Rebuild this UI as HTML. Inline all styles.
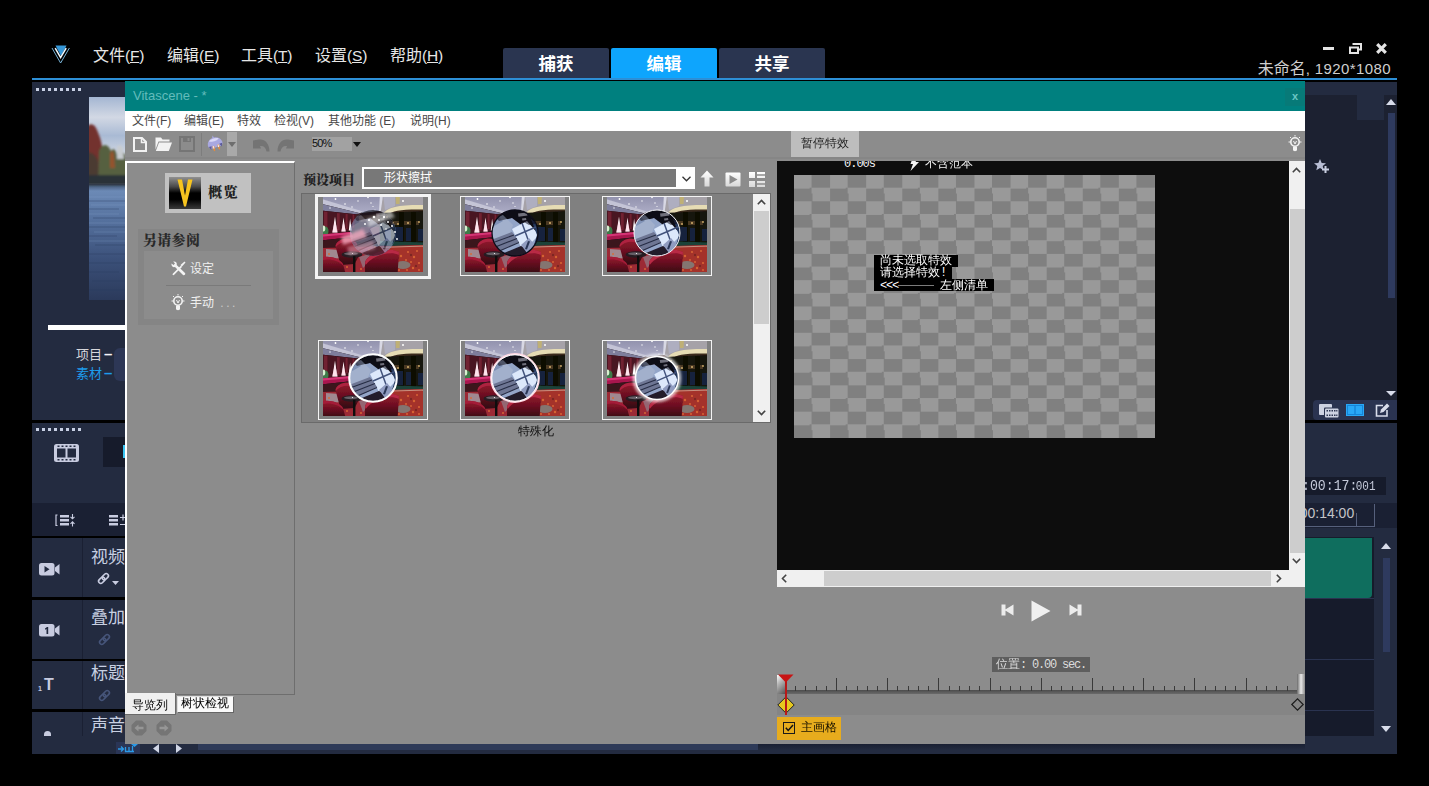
<!DOCTYPE html>
<html lang="zh-CN">
<head>
<meta charset="utf-8">
<title>Vitascene</title>
<style>
*{box-sizing:border-box;margin:0;padding:0}
html,body{width:1429px;height:786px;overflow:hidden;background:#000}
body{position:relative;font-family:"Liberation Sans","Noto Sans CJK SC",sans-serif;color:#fff}
.a{position:absolute}
.t{position:absolute;white-space:nowrap;line-height:1}
svg{position:absolute;overflow:visible}
/* main app */
#menubar .t{font-size:16px;color:#e6e6e6;top:48px}
.tab{position:absolute;top:48px;height:31px;background:#2a3550;color:#fff;font-weight:bold;font-size:17.5px;text-align:center;line-height:33px;border-radius:2px 2px 0 0}
.tab.on{background:#0ea5fd}
#blueline{left:32px;top:78px;width:1365px;height:2px;background:#2d8fd6}
#leftp{left:32px;top:80px;width:94px;height:675px;background:#232b40}
#rightp{left:1305px;top:80px;width:92px;height:675px;background:#232b40}
/* vitascene */
#vs{left:125px;top:81px;width:1180px;height:663px;background:#8c8c8c}
#vs .title{left:0;top:0;width:1180px;height:30px;background:#00807f}
#vs .menu{left:0;top:30px;width:1180px;height:20px;background:#fff}
#vs .menu .t{font-size:12px;color:#484848;top:4px}

#menubar u{text-decoration:underline}
.lat{font-size:15.5px;letter-spacing:-.2px}
.navy{background:#232b40}
.dk{background:#161b2b}
.dots{position:absolute;height:3px;width:46px;background:repeating-linear-gradient(90deg,#c8d0e4 0 3px,transparent 3px 6px)}
.trk{position:absolute;left:32px;width:93px;background:#232b40}
.trk i{position:absolute;left:50px;top:0;bottom:0;width:1px;background:#1a2033}
.trk .t{left:59px;font-size:17px;color:#c8d0e2}

#vs .tt{position:absolute;white-space:nowrap;line-height:1}
.ser{font-family:"Liberation Serif","Noto Serif CJK SC",serif}
.ls{letter-spacing:-1.2px}
.pix{font-family:"Liberation Mono","WenQuanYi Zen Hei","Noto Sans CJK SC",monospace}
.frame{position:absolute;width:110px;height:80px;border:1px solid #f4f4f4}
.frame svg{left:4px;top:0}
.frame.sel{border:3px solid #f4f4f4;width:116px;height:85px}
.frame.sel svg{left:5px;top:0}
</style>
</head>
<body>

<svg width="0" height="0" style="left:0;top:0">
<defs>
<filter id="b1" x="-5%" y="-5%" width="110%" height="110%"><feGaussianBlur stdDeviation="0.55"/></filter>
<filter id="b2" x="-20%" y="-20%" width="140%" height="140%"><feGaussianBlur stdDeviation="1.6"/></filter>
<linearGradient id="ceil" x1="0" y1="0" x2="0" y2="1"><stop offset="0" stop-color="#8e8eaa"/><stop offset="1" stop-color="#adadc6"/></linearGradient>
<linearGradient id="sph" x1="0" y1="0" x2="1" y2="1"><stop offset="0" stop-color="#8fa8d0"/><stop offset=".5" stop-color="#c8d8f0"/><stop offset="1" stop-color="#5a6a90"/></linearGradient>
<linearGradient id="chg" x1="0" y1="0" x2="0" y2="1"><stop offset="0" stop-color="#96172e"/><stop offset=".45" stop-color="#6e1022"/><stop offset="1" stop-color="#2e0810"/></linearGradient><clipPath id="tc"><rect width="100" height="75"/></clipPath>
<clipPath id="cc"><circle cx="50" cy="36" r="23"/></clipPath>
<g id="room" clip-path="url(#tc)">
  <rect width="100" height="75" fill="#20120f"/>
  <g filter="url(#b1)">
  <path d="M-3 -3h66l-6 17-17 2L-3 2z" fill="url(#ceil)"/>
  <path d="M-3 1.500L40 14.500l-3 1.800L-3 6.500z" fill="#c4c4d6"/>
  <path d="M-3 6.500l40 9.800-2 1.200L-3 13.500z" fill="#7e7e9c"/>
  <path d="M-3 13.500l38 4-3 16L-3 38z" fill="#4a1320"/>
  <path d="M1 14.500l3.500 .4v20l-3.500 .5zM14 16l2.800 .3v17l-2.800 .3zM22.500 16.800l2.200 .2v15l-2.200 .3zM29.500 17.500l1.800 .2v13l-1.800 .3z" fill="#702030"/>
  <path d="M33 17l25-3v34l-27-4z" fill="#3e2428"/>
  <path d="M36 19l20-2v6l-20 2z" fill="#6a4a40"/>
  <path d="M38 30l18 0v8l-20-1z" fill="#5a2430"/>
  <path d="M60 -3h43v20H62l-5-3z" fill="#a6a2a8"/>
  <path d="M57 -3h3.200L57.800 14h-1.800z" fill="#d8d8e4"/>
  <path d="M60 -3h12v12l-10 4z" fill="#aeaec0"/>
  <path d="M62 17c4-5 14-7 41-6.500v8H62z" fill="#3a2c1e"/>
  <path d="M61 16c4-6 16-8.500 42-8v4.500c-24-.5-34 1-38 5.500z" fill="#e6dcb4"/>
  
  <path d="M72.500 -2h4.500l-.5 9h-3.500z" fill="#c6b466" opacity=".8"/>
  <path d="M57 16l46-2v37l-46-4z" fill="#18120e"/>
  <path d="M66 24h30v4H66z" fill="#4a3820"/>
  <path d="M76 15h5v32h-5zM88 15h5v33h-5z" fill="#0a0806"/>
  <path d="M72 30h8v14h-8zM83 31h5v13h-5zM95 32h5v12h-5zM62 33h6v11h-6z" fill="#18233c"/>
  <path d="M57 44l46 1.500v5.500l-46-3z" fill="#1b4238"/>
  <path d="M9.500 35.500L12 19.500l2.200 16zM18.600 34.500L20.500 20.500l2 14zM25.800 33.500l1.300-12 1.600 12z" fill="#fff"/>
  <path d="M9 35.500l3-12 3 12zM18 34.500l2.500-10 2.500 10z" fill="#ffd0e0" opacity=".6"/>
  <ellipse cx="2" cy="34" rx="3.500" ry="4.500" fill="#3e7a48"/>
  <ellipse cx="0.500" cy="31.500" rx="1.800" ry="3" fill="#d8f0d0"/>
  <path d="M-3 37.500l31-2.500 2 5-33 3.500z" fill="#a8154e"/>
  <path d="M-3 37.500l31-2.500 .8 2-31.800 2.800z" fill="#d43474"/>
  <path d="M-3 43.500l33-3.500 1 8-34 4.500z" fill="#3a141c"/>
  <path d="M-3 51l106-3v30H-3z" fill="#9c2a36"/>
  <path d="M56 49.500l47-1.500v30H52z" fill="#a4322c"/>
  <path d="M60 50.300l40-1.200 3 6" fill="none" stroke="#d0a894" stroke-width=".8"/>
  <ellipse cx="80" cy="68" rx="7.500" ry="4" fill="#84746f"/>
  <path d="M3 52l14 1 2 8-16 1z" fill="#a08890"/>
  <path d="M36 60l10-3 2 6-8 8z" fill="#946672"/>
  <g fill="#dc6a34" opacity=".9"><circle cx="62" cy="56" r="1.100"/><circle cx="67" cy="60" r="1.200"/><circle cx="72" cy="55" r="1"/><circle cx="78" cy="59" r="1.200"/><circle cx="85" cy="55" r="1.100"/><circle cx="91" cy="60" r="1.200"/><circle cx="96" cy="66" r="1.100"/><circle cx="90" cy="71" r="1.200"/><circle cx="70" cy="70" r="1.100"/><circle cx="64" cy="66" r="1"/><circle cx="83" cy="63" r="1"/><circle cx="76" cy="73" r="1"/><circle cx="96" cy="73" r="1"/><circle cx="58" cy="71" r="1"/><circle cx="6" cy="57" r="1"/><circle cx="24" cy="70" r="1"/><circle cx="38" cy="72" r="1"/><circle cx="46" cy="53" r="1"/><circle cx="52" cy="50" r="1"/><circle cx="88" cy="65" r="1"/><circle cx="74" cy="64" r="1"/><circle cx="94" cy="54" r="1"/><circle cx="60" cy="61" r="1"/><circle cx="68" cy="74" r="1"/><circle cx="84" cy="73" r="1"/></g>
  <g fill="#6c2420" opacity=".7"><circle cx="65" cy="57" r="1.200"/><circle cx="75" cy="61" r="1.200"/><circle cx="88" cy="58" r="1.200"/><circle cx="93" cy="69" r="1.200"/><circle cx="62" cy="70" r="1.200"/><circle cx="70" cy="66" r="1.200"/></g>
  <path d="M12.500 49c1-8 17-10 21-3l3 12-5 9-14 1z" fill="url(#chg)"/>
  <path d="M12.500 49c1-8 17-10 21-3l.5 2c-5-5-17-4-21 2z" fill="#ae2440"/>
  <path d="M42 66c1-9 24-17 34-11l-1.500 23H42z" fill="url(#chg)"/>
  <path d="M42 66c1-9 24-17 34-11l-.3 3c-9-5-28 2-33 10z" fill="#b82a44"/>
  <path d="M-3 61c8-3 19 0 23 6l3 11H-3z" fill="url(#chg)"/>
  <path d="M-3 61c8-3 19 0 23 6l.5 2c-5-6-16-8-23.500-5z" fill="#a41e38"/>
  <ellipse cx="29" cy="57.500" rx="10.500" ry="3.300" fill="#261d22"/>
  <ellipse cx="28" cy="56.800" rx="7" ry="1.500" fill="#665e66"/>
  <path d="M30 59h2.400v19H30z" fill="#0e080a"/>
  </g>
  <g fill="#fff"><circle cx="12.500" cy="2" r=".9"/><circle cx="22" cy="7" r=".8"/><circle cx="7" cy="11" r=".7"/><circle cx="29" cy="10" r=".7"/><circle cx="35" cy="4" r=".7"/><circle cx="45" cy="0.500" r=".8"/><circle cx="48" cy="6" r=".7"/><circle cx="50" cy="9.500" r=".6"/><circle cx="80" cy="4" r="1"/><circle cx="52" cy="13" r=".6"/><circle cx="29.500" cy="56.500" r=".6"/></g>
  <g fill="#d4b06c" filter="url(#b1)"><circle cx="70" cy="26" r="1"/><circle cx="75" cy="27" r=".9"/><circle cx="85" cy="26" r="1"/><circle cx="96" cy="25" r=".9"/><circle cx="64" cy="20" r=".9"/></g>
</g>
<g id="ball">
  <circle cx="50" cy="36" r="23" fill="#93a5c8"/>
  <g clip-path="url(#cc)" filter="url(#b1)">
    <path d="M30 20l8-7 14-3 14 4 8 12 1 9-16-5-12-9-12 3z" fill="#110e18"/>
    <path d="M24 22l14-4 10 10-4 10-20 7z" fill="#a2b0cc"/>
    <path d="M24 24l10-4 4 4-14 8z" fill="#7f91b6"/>
    <path d="M53 16.500l9-1 .5 3-9 1.200zM57 21.500l4-.6 .4 2-4 .7z" fill="#e8eef8"/>
    <path d="M47 32l15-8 12 14-16 16z" fill="#dce8fb"/>
    <path d="M66 22l10 8-2 22-8 6 6-20z" fill="#263a60"/>
    <path d="M57 26l8 22M50 39l21-9" stroke="#42527c" stroke-width="1.500" fill="none"/>
    <path d="M26 43l21-8 7 10-24 12z" fill="#6e7694"/>
    <path d="M27 46l22-8M29 50.500l23-9M32 55l22-9.500" stroke="#262c44" stroke-width="1.100" fill="none"/>
    <path d="M34 58l22-9 10 4-8 10H40z" fill="#211a2c"/>
    <path d="M56 48l8-7 6 7-8 8z" fill="#909cc0"/>
    <path d="M60 52l3-8 2 .5-3 8z" fill="#2c3858"/>
    <path d="M24 12h52v14l-12 2-14-8-16 4z" fill="#0c0a14" opacity=".55"/>
    <path d="M24 12l14 0-8 14-6 10z" fill="#5a6888" opacity=".5"/>
  </g>
</g>
</defs>
</svg>
<!-- MAIN APP MENU -->
<div id="menubar" class="a" style="left:0;top:0;width:1429px;height:78px">
  <span class="t" style="left:93px">文件<span class="lat">(<u>F</u>)</span></span>
  <span class="t" style="left:167px">编辑<span class="lat">(<u>E</u>)</span></span>
  <span class="t" style="left:241px">工具<span class="lat">(<u>T</u>)</span></span>
  <span class="t" style="left:315px">设置<span class="lat">(<u>S</u>)</span></span>
  <span class="t" style="left:390px">帮助<span class="lat">(<u>H</u>)</span></span>
</div>
<svg style="left:50px;top:44px" width="22" height="21" viewBox="50 44 22 21"><path d="M55.500 45.500h11l-2 4-3.500 6.500-3.500-6.500z" fill="#3596d6"/><path d="M55.200 48.200L60.600 57.600 66.200 48.200" fill="none" stroke="#f4fbff" stroke-width="1.500"/><path d="M52 48L60.600 63 69.400 48" fill="none" stroke="#78b4d8" stroke-width="1"/></svg>
<div class="tab" style="left:503px;width:106px">捕获</div>
<div class="tab on" style="left:611px;width:106px">编辑</div>
<div class="tab" style="left:719px;width:106px">共享</div>
<span class="t" style="right:38px;top:61px;font-size:16px;color:#cfcfcf">未命名<span style="font-size:15px;letter-spacing:.4px">, 1920*1080</span></span>
<div class="a" style="left:1323px;top:47px;width:11px;height:3px;background:#e4e4e4"></div>
<svg style="left:1349px;top:43px" width="13" height="11" viewBox="0 0 13 11"><path d="M3.5 1h8.500v5.500h-2.500" fill="none" stroke="#e4e4e4" stroke-width="2"/><rect x="1" y="4.500" width="8" height="5.500" fill="none" stroke="#e4e4e4" stroke-width="2"/></svg>
<svg style="left:1376px;top:43px" width="11" height="11" viewBox="0 0 11 11"><path d="M1.200 1.200L9.800 9.800M9.800 1.200L1.200 9.800" stroke="#e4e4e4" stroke-width="3.200"/></svg>
<div id="blueline" class="a"></div>

<!-- LEFT PANELS -->
<div class="a navy" style="left:32px;top:82px;width:94px;height:338px"></div>
<div class="dots" style="left:36px;top:88px"></div>
<svg id="photo" style="left:89px;top:97px" width="36" height="203" viewBox="0 0 36 203">
<defs><linearGradient id="sky" x1="0" y1="0" x2="0" y2="1"><stop offset="0" stop-color="#a4b6d2"/><stop offset=".22" stop-color="#d2d8e4"/><stop offset=".42" stop-color="#a9bad4"/><stop offset=".62" stop-color="#cfd6e2"/><stop offset="1" stop-color="#c4ccd8"/></linearGradient>
<linearGradient id="wat" x1="0" y1="0" x2="0" y2="1"><stop offset="0" stop-color="#3c4c66"/><stop offset=".06" stop-color="#6c8ab6"/><stop offset=".3" stop-color="#56729f"/><stop offset=".65" stop-color="#3b5079"/><stop offset="1" stop-color="#2b3a5b"/></linearGradient>
<filter id="b3" x="-10%" y="-10%" width="120%" height="120%"><feGaussianBlur stdDeviation="1.100"/></filter>
<clipPath id="pc"><rect width="36" height="203"/></clipPath></defs>
<g clip-path="url(#pc)">
<rect width="36" height="92" fill="url(#sky)"/>
<rect y="87" width="36" height="116" fill="url(#wat)"/>
<g filter="url(#b3)">
<path d="M-2 30c3-5 8-3 10 3 2 5 4 9 5 16l1 12 2 26H-2z" fill="#73302f"/>
<path d="M-2 56c4-2 9 2 11 8l2 24H-2z" fill="#4c3a30"/>
<path d="M10 54c3-8 9-8 12 0 2-3 5-2 6 4 3-4 9-3 10 3v27H9z" fill="#566040"/>
<path d="M21 57c1-4 3-4 4 0l1 14h-5z" fill="#94522e"/>
<path d="M28 50c2-3 5-2 6 2l1 10h-7z" fill="#c8ccd0"/>
<path d="M-2 78h40v10H-2z" fill="#2a3238"/>
</g>
<g stroke="#2a3b5e" stroke-width=".8" opacity=".5"><path d="M0 104h36M0 112h30M4 121h32M0 130h36M0 139h28M6 148h30M0 157h36M0 166h36M0 175h30M3 184h33M0 193h36"/></g>
<g stroke="#8caad2" stroke-width=".7" opacity=".35"><path d="M0 100h36M2 108h34M0 117h30M0 126h36M5 135h31M0 144h36"/></g>
</g></svg>
<div class="a" style="left:48px;top:325px;width:78px;height:5px;background:#fff"></div>
<div class="a" style="left:114px;top:348px;width:20px;height:33px;border-radius:6px;background:#2d3756"></div>
<span class="t" style="left:76px;top:346px;font-size:13px;color:#d8d8dc">项目<b style="font-family:'Liberation Sans';font-size:15px;margin-left:2px;color:#f4f4f8">–</b></span>
<span class="t" style="left:76px;top:364.5px;font-size:13px;color:#1d9cec">素材<b style="font-family:'Liberation Sans';font-size:15px;margin-left:2px">–</b></span>

<div class="a navy" style="left:32px;top:423px;width:94px;height:80px"></div>
<div class="dots" style="left:36px;top:428px"></div>
<div class="a dk" style="left:103px;top:437px;width:23px;height:30px"></div>
<div class="a" style="left:123px;top:445px;width:3px;height:13px;background:#39c4f2"></div>
<div class="a" style="left:32px;top:503px;width:94px;height:33px;background:#1a2033"></div>
<div class="trk" style="top:538px;height:59px"><i></i><span class="t" style="top:11px">视频</span></div>
<div class="trk" style="top:600px;height:59px"><i></i><span class="t" style="top:9px">叠加</span></div>
<div class="trk" style="top:661px;height:48px"><i></i><span class="t" style="top:4px">标题</span></div>
<div class="trk" style="top:712px;height:24px"><i></i><span class="t" style="top:5px">声音</span></div>
<div class="a navy" style="left:32px;top:736px;width:1365px;height:18px"></div>
<div class="a" style="left:198px;top:744px;width:560px;height:6px;background:#2e3a58"></div><div class="a" style="left:758px;top:743px;width:560px;height:7px;background:linear-gradient(#181e30,#232b40)"></div>

<!-- RIGHT PANELS -->
<div class="a" style="left:1305px;top:82px;width:92px;height:338px;background:#1c2131"></div>
<div class="a navy" style="left:1305px;top:82px;width:92px;height:13px"></div>
<div class="a navy" style="left:1357px;top:95px;width:27px;height:25px"></div>

<div class="a" style="left:1388px;top:113px;width:7px;height:185px;background:#2e3a5e"></div>
<div class="a" style="left:1313px;top:400px;width:84px;height:20px;border-radius:4px 0 0 4px;background:#2a3350"></div>
<div class="a navy" style="left:1305px;top:423px;width:92px;height:331px"></div>
<div class="a dk" style="left:1305px;top:477px;width:81px;height:18px"></div>
<div class="a" style="left:1305px;top:503px;width:92px;height:25px;background:#1a2033"></div>
<div class="a dk" style="left:1305px;top:537px;width:69px;height:199px"></div>
<div class="a" style="left:1305px;top:538px;width:67px;height:60px;background:#0f6e5e;border-radius:0 0 4px 0"></div>
<div class="a" style="left:1383px;top:558px;width:7px;height:94px;background:#2e3a5e"></div>


<!-- left icons -->
<svg style="left:54px;top:444px" width="25" height="18" viewBox="0 0 25 18"><rect x="0" y="0" width="25" height="18" rx="2.500" fill="#c8cce0"/><rect x="3" y="4.500" width="8.500" height="9" fill="#232b40"/><rect x="13.500" y="4.500" width="8.500" height="9" fill="#232b40"/><path d="M3.500 2.300h2M7.500 2.300h2M11.500 2.300h2M15.500 2.300h2M19.500 2.300h2M3.500 15.700h2M7.500 15.700h2M11.500 15.700h2M15.500 15.700h2M19.500 15.700h2" stroke="#232b40" stroke-width="1.600"/></svg>
<svg style="left:55px;top:514px" width="21" height="13" viewBox="0 0 21 13"><path d="M2.500 1H1v10.500h1.500" fill="none" stroke="#c8cce0" stroke-width="1.200"/><path d="M5 1h9v2.600H5zM5 5h9v2.600H5zM5 9h9v2.600H5z" fill="#c8cce0"/><path d="M17.500 0v4.500M15.500 2.800l2 2 2-2M17.500 12.500V8M15.500 9.800l2-2 2 2" fill="none" stroke="#c8cce0" stroke-width="1.100"/></svg>
<svg style="left:109px;top:514px" width="17" height="13" viewBox="0 0 17 13"><path d="M0 1h9v2.600H0zM0 5h9v2.600H0zM0 9h9v2.600H0z" fill="#c8cce0"/><path d="M11 3.500h6M14 0.500v6M11 10.500h6" stroke="#c8cce0" stroke-width="1.200"/></svg>
<svg style="left:39px;top:563px" width="21" height="13" viewBox="0 0 21 13"><rect x="0" y="0" width="15.500" height="12.500" rx="2.500" fill="#c8cce0"/><path d="M16 4.500L20.500 1v10.500L16 8z" fill="#c8cce0"/><path d="M5.500 3l5 3.300-5 3.300z" fill="#232b40"/></svg>
<svg style="left:39px;top:624px" width="21" height="13" viewBox="0 0 21 13"><rect x="0" y="0" width="15.500" height="12.500" rx="2.500" fill="#c8cce0"/><path d="M16 4.500L20.500 1v10.500L16 8z" fill="#c8cce0"/><path d="M6 4.500L8 3h1.200v7H7.500V5L6 5.800z" fill="#232b40"/></svg>
<span class="t" style="left:44px;top:677px;font-size:16px;font-weight:bold;color:#c8cce0">T</span>
<span class="t" style="left:38px;top:685px;font-size:7px;font-weight:bold;color:#c8cce0">1</span>
<div class="a" style="left:44px;top:731px;width:7px;height:5px;border-radius:4px 4px 0 0;background:#c8cce0"></div>
<svg style="left:97px;top:572px" width="13" height="13" viewBox="0 0 13 13"><g fill="none" stroke="#c8cce0" stroke-width="1.600" transform="rotate(-45 6.500 6.500)"><rect x="0.500" y="4.300" width="7" height="4.400" rx="2.200"/><rect x="5.500" y="4.300" width="7" height="4.400" rx="2.200"/></g></svg>
<svg style="left:112px;top:581px" width="7" height="4" viewBox="0 0 7 4"><path d="M0 0h7L3.500 4z" fill="#c8cce0"/></svg>
<svg style="left:98px;top:633px" width="13" height="13" viewBox="0 0 13 13"><g fill="none" stroke="#46557a" stroke-width="1.600" transform="rotate(-45 6.500 6.500)"><rect x="0.500" y="4.300" width="7" height="4.400" rx="2.200"/><rect x="5.500" y="4.300" width="7" height="4.400" rx="2.200"/></g></svg>
<svg style="left:98px;top:689px" width="13" height="13" viewBox="0 0 13 13"><g fill="none" stroke="#46557a" stroke-width="1.600" transform="rotate(-45 6.500 6.500)"><rect x="0.500" y="4.300" width="7" height="4.400" rx="2.200"/><rect x="5.500" y="4.300" width="7" height="4.400" rx="2.200"/></g></svg>
<div class="a" style="left:116px;top:742px;width:24px;height:12px;background:#2a3556"></div>
<svg style="left:118px;top:744px" width="20" height="9" viewBox="0 0 20 9"><path d="M0 5h5M3 2.500L5.500 5 3 7.500M7.500 3v4.500h8.500M11 3v4.500M14.500 2v5.500" fill="none" stroke="#2a9ae8" stroke-width="1.300"/><path d="M13 0h7l-3.500 3z" fill="#2a9ae8"/></svg>
<svg style="left:153px;top:744px" width="6" height="9" viewBox="0 0 6 9"><path d="M6 0v9L0 4.500z" fill="#d0d6e6"/></svg>
<svg style="left:176px;top:744px" width="6" height="9" viewBox="0 0 6 9"><path d="M0 0v9L6 4.500z" fill="#d0d6e6"/></svg>
<!-- right icons -->
<svg style="left:1314px;top:159px" width="16" height="15" viewBox="0 0 16 15"><path d="M6 0l1.700 4 4.300.3-3.300 2.800 1 4.200L6 9l-3.700 2.300 1-4.200L0 4.300 4.300 4z" fill="#b8bed4"/><path d="M8 10.500h7M11.500 7v7" stroke="#c8cee0" stroke-width="2"/></svg>
<svg style="left:1386px;top:99px" width="10" height="6" viewBox="0 0 10 6"><path d="M5 0l5 6H0z" fill="#d8dcea"/></svg>
<svg style="left:1386px;top:391px" width="10" height="5" viewBox="0 0 10 5"><path d="M0 0h10L5 5z" fill="#d8dcea"/></svg>
<svg style="left:1319px;top:404px" width="20" height="14" viewBox="0 0 20 14"><rect x="0" y="0" width="13" height="11" rx="1" fill="#cdd2e2"/><rect x="5" y="3.500" width="15" height="10.500" rx="1" fill="#2b3450"/><rect x="6" y="4.500" width="13.500" height="9" rx="1" fill="#cdd2e2"/><path d="M7.500 6.800h1.500M10 6.800h1.500M12.500 6.800h1.500M15 6.800h1.500M17.200 6.800h1.200M7.500 11.200h1.500M10 11.200h1.500M12.500 11.200h1.500M15 11.200h1.500M17.200 11.200h1.200" stroke="#2b3450" stroke-width="1.600"/></svg>
<svg style="left:1346px;top:404px" width="18" height="12" viewBox="0 0 18 12"><rect x="0.500" y="0.500" width="17" height="11" fill="#1585d8" stroke="#29a8f6"/><rect x="2" y="2" width="6.300" height="8" fill="#29a8f6"/><rect x="9.700" y="2" width="6.300" height="8" fill="#29a8f6"/></svg>
<svg style="left:1375px;top:403px" width="15" height="14" viewBox="0 0 15 14"><path d="M8 2.500H1.500v10.500H12V7" fill="none" stroke="#d8dcea" stroke-width="1.600"/><path d="M5 10l1-3.500 6-6 2.500 2.500-6 6z" fill="#d8dcea"/></svg>
<svg style="left:1381px;top:543px" width="10" height="6" viewBox="0 0 10 6"><path d="M5 0l5 6H0z" fill="#d8dcea"/></svg>
<svg style="left:1381px;top:726px" width="10" height="6" viewBox="0 0 10 6"><path d="M0 0h10L5 6z" fill="#d8dcea"/></svg>
<span class="t" style="left:1302px;top:479px;font-size:15px;color:#c4c9d9;font-family:'Liberation Mono',monospace;transform:scaleX(.88);transform-origin:0 0">:00:17:<span style="font-size:12.500px;margin-left:-2px">001</span></span>
<span class="t" style="left:1288px;top:506px;font-size:14px;color:#c4c4c8">0:00:14:00</span>
<div class="a" style="left:1356px;top:513px;width:1px;height:14px;background:#56607c"></div><div class="a" style="left:1305px;top:526px;width:70px;height:1px;background:#56607c"></div>
<div class="a" style="left:1374px;top:504px;width:1px;height:23px;background:#56607c"></div>
<div class="a" style="left:1305px;top:598px;width:69px;height:1px;background:#2a3350"></div>
<div class="a" style="left:1305px;top:659px;width:69px;height:1px;background:#2a3350"></div>
<div class="a" style="left:1305px;top:710px;width:69px;height:1px;background:#2a3350"></div>

<!-- VITASCENE WINDOW -->
<div id="vs" class="a">
  <div class="a title"></div>
  <div class="a menu">
    <span class="t" style="left:7px">文件(F)</span>
    <span class="t" style="left:59px">编辑(E)</span>
    <span class="t" style="left:112px">特效</span>
    <span class="t" style="left:149px">检视(V)</span>
    <span class="t" style="left:203px">其他功能 (E)</span>
    <span class="t" style="left:285px">说明(H)</span>
  </div>

  <span class="tt" style="left:8px;top:8px;font-size:13px;color:#63bcbb">Vitascene - *</span>
  <div class="a" style="left:1160px;top:7px;width:20px;height:18px;background:#077a78"></div>
  <span class="tt" style="left:1167px;top:10px;font-size:11px;font-weight:bold;color:#6cc6c4">x</span>
  <!-- toolbar -->
  <div class="a" style="left:0;top:76px;width:1180px;height:2px;background:#868686"></div>
  <div id="tb" class="a" style="left:0;top:50px;width:660px;height:27px">
    <svg style="left:8px;top:6px" width="14" height="15" viewBox="0 0 14 15"><path d="M1 1h8l4 4v9H1z" fill="none" stroke="#f2f2f2" stroke-width="2"/><path d="M8.500 1v4.500H13" fill="none" stroke="#f2f2f2" stroke-width="1.500"/></svg>
    <svg style="left:30px;top:5px" width="17" height="16" viewBox="0 0 17 16"><path d="M0.500 1.500h5.500l1.500 2h7v2h-11l-3 8z" fill="#f2f2f2"/><path d="M4 6.500h13l-3.200 8.500H0.800z" fill="#f2f2f2"/></svg>
    <svg style="left:54px;top:5px" width="16" height="16" viewBox="0 0 16 16"><path d="M1 1h14v14H1z" fill="none" stroke="#757575" stroke-width="2"/><rect x="4" y="1" width="8" height="5" fill="#757575"/><rect x="8.500" y="2" width="2" height="3" fill="#8c8c8c"/></svg>
    <div class="a" style="left:76px;top:2px;width:1px;height:23px;background:#7d7d7d"></div>
    <svg style="left:82px;top:4px;transform:rotate(-18deg)" width="16" height="17" viewBox="0 0 16 17"><path d="M8 0l1 2.500c3.500 0.500 6 2.500 6.500 6 .3 2-1 3.500-2.500 4H3c-1.500-.5-2.800-2-2.500-4C1 5 3.500 3 7 2.500z" fill="#a9a8e0"/><path d="M3 4.500c2-1.500 7-1.800 10 0-1 2-9 2-10 0z" fill="#d9d8f6"/><path d="M1 10l1.500 3.500L4 10zM12 10l1.500 3.500L15 10z" fill="#5b5a9a"/><path d="M4.500 10.500h2l-.5 5h-1.200zM9.500 10.500h2l-.3 5h-1.200z" fill="#e88a3a"/><path d="M5 10.500h1v2.500h-1zM10 10.500h1v2.500h-1z" fill="#f3f3f3"/></svg>
    <div class="a" style="left:102px;top:1px;width:10px;height:24px;background:#a9a9a9"></div>
    <svg style="left:103px;top:11px" width="8" height="5" viewBox="0 0 8 5"><path d="M0 0h8L4 5z" fill="#6e6e6e"/></svg>
    <svg style="left:128px;top:8px" width="17" height="13" viewBox="0 0 17 13"><path d="M0 1.500L4.500 0.800C11 -1 16.500 3.500 16.500 12.500H13.500C13 8.500 10.500 6.500 7 7L8 9.500H0z" fill="#747474"/></svg>
    <svg style="left:152px;top:8px" width="17" height="13" viewBox="0 0 17 13"><path d="M17 1.500L12.500 0.800C6 -1 0.500 3.500 0.500 12.500H3.500C4 8.500 6.500 6.500 10 7L9 9.500H17z" fill="#747474"/></svg>
    <div class="a" style="left:187px;top:6px;width:40px;height:14px;background:#a2a2a2"></div>
    <span class="tt" style="left:187px;top:7px;font-size:11px;letter-spacing:-0.9px;color:#111">50%</span>
    <svg style="left:228px;top:11px" width="8" height="5" viewBox="0 0 8 5"><path d="M0 0h8L4 5z" fill="#111"/></svg>
  </div>
  <!-- left panel -->
  <div class="a" style="left:0;top:80px;width:170px;height:534px;border-top:2px solid #fff;border-left:2px solid #fff;border-right:1px solid #6e6e6e;border-bottom:1px solid #6e6e6e"></div>
  <div class="a" style="left:40px;top:92px;width:86px;height:40px;background:#c1c1c1"></div>
  <div class="a" style="left:44px;top:96px;width:32px;height:32px;background:linear-gradient(#909090 0,#4a4a4a 30%,#000 50%,#000 70%,#3a3a3a 100%)"></div>
  <svg style="left:52px;top:98px" width="16" height="28" viewBox="0 0 16 28"><path d="M0.500 0.500h4.500L8 16.500 11 0.500h4.500L9 27.500h-2z" fill="#f7c41f"/></svg>
  <span class="tt ser" style="left:83px;top:105px;font-size:14px;font-weight:900;letter-spacing:1.500px;color:#232323">概览</span>
  <div class="a" style="left:13px;top:148px;width:141px;height:96px;background:#858585"></div>
  <span class="tt ser" style="left:18px;top:152px;font-size:14px;font-weight:900;letter-spacing:.3px;color:#2a2a2a;margin-top:1px">另请参阅</span>
  <div class="a" style="left:19px;top:170px;width:129px;height:68px;background:#8c8c8c"></div>
  <svg style="left:46px;top:180px;transform:scaleX(-1)" width="15" height="15" viewBox="0 0 15 15"><path d="M1.500 0.500L0.500 1.500 4 5.500 5.500 4zM5 4.500L13 12.500c1 1 0 2.500-1.200 1.300L4 6z" fill="#f4f4f4"/><path d="M14.500 2.500l-2 1.500-1.500-1.500 1.800-2c-2.500-.5-4.200 1.500-3.500 3.500L1 12c-1 1 .8 3 2 2l8-8c2 .7 4-1 3.500-3.500z" fill="#f4f4f4"/></svg>
  <span class="tt" style="left:65px;top:182px;font-size:12px;color:#f0f0f0">设定</span>
  <div class="a" style="left:41px;top:204px;width:85px;height:1px;background:#7a7a7a"></div>
  <svg style="left:46px;top:213px" width="14" height="17" viewBox="0 0 14 17"><circle cx="7" cy="7" r="4.200" fill="none" stroke="#f4f4f4" stroke-width="1.600"/><path d="M5 11.500h4v3.500c0 1.500-4 1.500-4 0z" fill="#f4f4f4"/><path d="M5.500 6l1.500 3 1.500-3" fill="none" stroke="#f4f4f4" stroke-width="1"/><path d="M7 0v1.500M0.500 7h1.500M12 7h1.500M2 2l1 1M12 2l-1 1" stroke="#f4f4f4" stroke-width="1"/></svg>
  <span class="tt" style="left:65px;top:216px;font-size:12px;color:#f0f0f0">手动 <span style="letter-spacing:2.500px;color:#c8c8c8;margin-left:3px">...</span></span>

  <!-- presets -->
  <span class="tt ser" style="left:178px;top:92px;font-size:13px;font-weight:900;color:#222">预设项目</span>
  <div class="a" style="left:237px;top:86px;width:333px;height:22px;background:#787878;border:2px solid #fff;border-right-width:19px"></div>
  <span class="tt" style="left:259px;top:91px;font-size:12px;color:#fff">形状擦拭</span>
  <svg style="left:557px;top:95px" width="9" height="6" viewBox="0 0 9 6"><path d="M0.500 0.800L4.500 4.800 8.500 0.800" fill="none" stroke="#333" stroke-width="1.300"/></svg>
  <svg style="left:575px;top:89px" width="14" height="17" viewBox="0 0 14 17"><defs><linearGradient id="wg" x1="0" y1="0" x2="0" y2="1"><stop offset="0" stop-color="#fff"/><stop offset="1" stop-color="#d8d8d8"/></linearGradient></defs><path d="M7 0.500L13.500 7.500h-4v9h-5v-9h-4z" fill="url(#wg)"/></svg>
  <svg style="left:600px;top:91px" width="16" height="15" viewBox="0 0 16 15"><rect x="0.500" y="0.500" width="15" height="14" rx="1" fill="url(#wg)"/><path d="M4.500 3l8 4.500-8 4.500z" fill="#8c8c8c"/></svg>
  <svg style="left:624px;top:91px" width="16" height="15" viewBox="0 0 16 15"><path d="M0 0h6v6H0zM0 9h6v6H0zM8 0h8v2.200H8zM8 3.800h8v2.200H8zM8 9h8v2.200H8zM8 12.800h8v2.200H8z" fill="url(#wg)"/></svg>
  <div id="grid" class="a" style="left:176px;top:112px;width:470px;height:230px;background:#808080;border:1px solid #6a6a6a"></div>
  <div class="frame sel" style="left:190px;top:113px"><svg width="100" height="75" viewBox="0 0 100 75"><use href="#room"/><g opacity=".62" filter="url(#b1)"><use href="#ball"/></g><g filter="url(#b2)"><path d="M18 40l22-8 4 8-24 8z" fill="#f0a8bc" opacity=".8"/><path d="M24 50l26-6 2 8-26 6z" fill="#e0a0b0" opacity=".55"/><path d="M44 22l24-8 4 6-26 10z" fill="#fff" opacity=".55"/></g><g fill="#fff"><circle cx="46" cy="23" r="1.100"/><circle cx="51" cy="20" r="1.300"/><circle cx="56" cy="23" r="1"/><circle cx="61" cy="20" r="1.200"/><circle cx="65" cy="25" r="1"/><circle cx="69" cy="29" r="1"/><circle cx="72" cy="35" r=".9"/><circle cx="58" cy="28" r="1"/><circle cx="74" cy="42" r=".9"/><circle cx="42" cy="27" r="1"/><circle cx="63" cy="32" r=".8"/></g></svg></div>
  <div class="frame" style="left:335px;top:115px"><svg width="100" height="75" viewBox="0 0 100 75"><use href="#room"/><use href="#ball"/><circle cx="50" cy="36" r="23" fill="none" stroke="#0c0c18" stroke-width="1.300"/></svg></div>
  <div class="frame" style="left:477px;top:115px"><svg width="100" height="75" viewBox="0 0 100 75"><use href="#room"/><use href="#ball"/><circle cx="50" cy="36" r="23" fill="none" stroke="#f2f2f6" stroke-width="1"/></svg></div>
  <div class="frame" style="left:193px;top:259px"><svg width="100" height="75" viewBox="0 0 100 75"><use href="#room"/><g transform="translate(0 1)"><circle cx="50" cy="36" r="23.800" fill="none" stroke="#fff" stroke-width="2" filter="url(#b1)"/><use href="#ball"/><circle cx="50" cy="36" r="23.200" fill="none" stroke="#fff" stroke-width=".9"/></g></svg></div>
  <div class="frame" style="left:335px;top:259px"><svg width="100" height="75" viewBox="0 0 100 75"><use href="#room"/><g transform="translate(0 1)"><circle cx="50" cy="36" r="23.800" fill="none" stroke="#ffd8e4" stroke-width="2.200" filter="url(#b1)"/><use href="#ball"/><circle cx="50" cy="36" r="23.200" fill="none" stroke="#fff" stroke-width="1"/></g></svg></div>
  <div class="frame" style="left:477px;top:259px"><svg width="100" height="75" viewBox="0 0 100 75"><use href="#room"/><g transform="translate(0 1)"><circle cx="50" cy="36" r="22.500" fill="none" stroke="#fff" stroke-width="3" filter="url(#b2)" opacity=".85"/><g transform="translate(50 36) scale(.92) translate(-50 -36)"><use href="#ball"/></g><circle cx="50" cy="36" r="21.500" fill="none" stroke="#fff" stroke-width="1.500" filter="url(#b1)"/></g></svg></div>
  <div class="a" style="left:628px;top:113px;width:17px;height:228px;background:#f0f0f0"></div>
  <div class="a" style="left:629px;top:130px;width:15px;height:113px;background:#cdcdcd"></div>
  <svg style="left:632px;top:118px" width="9" height="6" viewBox="0 0 9 6"><path d="M0.800 5.200L4.500 1.500 8.200 5.200" fill="none" stroke="#444" stroke-width="1.600"/></svg>
  <svg style="left:632px;top:329px" width="9" height="6" viewBox="0 0 9 6"><path d="M0.800 0.800L4.500 4.500 8.200 0.800" fill="none" stroke="#444" stroke-width="1.600"/></svg>
  <span class="tt pix" style="left:393px;top:345px;font-size:12px;color:#0a0a0a">特殊化</span>

  <!-- pause button / bulb -->
  <div class="a" style="left:666px;top:50px;width:68px;height:26px;background:#bdbdbd"></div>
  <span class="tt pix" style="left:676px;top:57px;font-size:12px;color:#222">暂停特效</span>
  <svg style="left:1163px;top:54px" width="14" height="17" viewBox="0 0 14 17"><circle cx="7" cy="7" r="4.200" fill="none" stroke="#f4f4f4" stroke-width="1.600"/><path d="M5 11.500h4v3.500c0 1.500-4 1.500-4 0z" fill="#f4f4f4"/><path d="M5.500 6l1.500 3 1.500-3" fill="none" stroke="#f4f4f4" stroke-width="1"/><path d="M7 0v1.500M0.500 7h1.500M12 7h1.500M2 2l1 1M12 2l-1 1" stroke="#f4f4f4" stroke-width="1"/></svg>
  <!-- preview -->
  <div id="pv" class="a" style="left:652px;top:80px;width:512px;height:409px;background:#0d0d0d;overflow:hidden">
    <span class="tt pix" style="left:67px;top:-3px;font-size:12px;color:#f4f4f4;letter-spacing:-1px">0.00s</span>
    <svg style="left:133px;top:-4px" width="10" height="14" viewBox="0 0 10 14"><path d="M3 0h6L5.500 5h3.500L0.500 14l2.500-7H0.500z" fill="#f4f4f4"/></svg>
    <span class="tt pix" style="left:148px;top:-3px;font-size:12px;color:#f4f4f4">不含范本</span>
    <div class="a" style="left:17px;top:14px;width:361px;height:263px;background-color:#999;background-image:conic-gradient(#808080 0 25%,transparent 0 50%,#808080 0 75%,transparent 0);background-size:36.100px 26.300px"></div>
    <div class="a" style="left:97px;top:94px;width:84px;height:12px;background:#000"></div>
    <div class="a" style="left:97px;top:106px;width:78px;height:12px;background:#000"></div>
    <div class="a" style="left:97px;top:118px;width:120px;height:12px;background:#000"></div>
    <span class="tt pix" style="left:103px;top:94px;font-size:12px;color:#fff">尚未选取特效</span>
    <span class="tt pix" style="left:103px;top:106px;font-size:12px;color:#fff">请选择特效!</span>
    <span class="tt pix" style="left:103px;top:118px;font-size:12px;color:#fff"><span class="ls">&lt;&lt;&lt;</span><span style="font-family:'WenQuanYi Zen Hei','Noto Sans CJK SC',sans-serif">———</span><span class="ls">&nbsp;</span>左侧清单</span>
  </div>
  <!-- v scroll -->
  <div class="a" style="left:1164px;top:80px;width:16px;height:425px;background:#f0f0f0"></div>
  <div class="a" style="left:1165px;top:128px;width:15px;height:344px;background:#cdcdcd"></div>
  <svg style="left:1167px;top:86px" width="9" height="6" viewBox="0 0 9 6"><path d="M0.800 5.200L4.500 1.500 8.200 5.200" fill="none" stroke="#444" stroke-width="1.600"/></svg>
  <svg style="left:1167px;top:477px" width="9" height="6" viewBox="0 0 9 6"><path d="M0.800 0.800L4.500 4.500 8.200 0.800" fill="none" stroke="#444" stroke-width="1.600"/></svg>
  <!-- h scroll -->
  <div class="a" style="left:652px;top:489px;width:528px;height:17px;background:#f0f0f0"></div>
  <div class="a" style="left:699px;top:490px;width:447px;height:15px;background:#cdcdcd"></div>
  <svg style="left:656px;top:493px" width="6" height="9" viewBox="0 0 6 9"><path d="M5.200 0.800L1.500 4.500 5.200 8.200" fill="none" stroke="#444" stroke-width="1.600"/></svg>
  <svg style="left:1151px;top:493px" width="6" height="9" viewBox="0 0 6 9"><path d="M0.800 0.800L4.500 4.500 0.800 8.200" fill="none" stroke="#444" stroke-width="1.600"/></svg>
  <!-- transport -->
  <svg style="left:876px;top:523px" width="13" height="12" viewBox="0 0 13 12"><path d="M0.500 0.500h4v11h-4zM12.500 0.500v11L3.500 6z" fill="#ececec"/></svg>
  <svg style="left:906px;top:519px" width="20" height="22" viewBox="0 0 20 22"><path d="M0.500 0.500L19.500 11 0.500 21.500z" fill="#f0f0f0"/></svg>
  <svg style="left:944px;top:523px" width="13" height="12" viewBox="0 0 13 12"><path d="M12.500 0.500h-4v11h4zM0.500 0.500v11L9.500 6z" fill="#ececec"/></svg>
  <!-- position -->
  <div class="a" style="left:867px;top:576px;width:98px;height:15px;background:#5e5e5e"></div>
  <span class="tt pix" style="left:871px;top:578px;font-size:12px;color:#dcdcdc;">位置<span class="ls">: 0.00 sec.</span></span>
  <!-- ruler -->
  <div class="a" style="left:652px;top:613px;width:528px;height:21px;background:#858585"></div>
  <div class="a" style="left:652px;top:609px;width:528px;height:4px;background:linear-gradient(#4c4c4c,#6a6a6a)"></div>
  <div class="a" style="left:652px;top:594px;width:8px;height:19px;background:linear-gradient(135deg,#fff 0,#bbb 35%,#555 100%)"></div>
  <div class="a" style="left:1172px;top:593px;width:8px;height:20px;background:linear-gradient(90deg,#6a6a6a,#e8e8e8 50%,#8a8a8a)"></div>
  <svg style="left:0;top:0" width="1180" height="662"><path d="M670.5 605v5M680.8 605v5M691.0 605v5M701.3 605v5M711.5 597v13M721.7 605v5M732.0 605v5M742.2 605v5M752.5 605v5M762.7 597v13M772.9 605v5M783.2 605v5M793.4 605v5M803.7 605v5M813.9 597v13M824.1 605v5M834.4 605v5M844.6 605v5M854.9 605v5M865.1 597v13M875.3 605v5M885.6 605v5M895.8 605v5M906.1 605v5M916.3 597v13M926.5 605v5M936.8 605v5M947.0 605v5M957.3 605v5M967.5 597v13M977.7 605v5M988.0 605v5M998.2 605v5M1008.5 605v5M1018.7 597v13M1028.9 605v5M1039.2 605v5M1049.4 605v5M1059.7 605v5M1069.9 597v13M1080.1 605v5M1090.4 605v5M1100.6 605v5M1110.9 605v5M1121.1 597v13M1131.3 605v5M1141.6 605v5M1151.8 605v5M1162.1 605v5" stroke="#3a3a3a" stroke-width="1" fill="none" shape-rendering="crispEdges"/></svg>
  <svg style="left:652px;top:615px" width="18" height="18" viewBox="0 0 18 18"><path d="M0.800 9L9 0.800 17.200 9 9 17.200z" fill="#e6c81e" stroke="#222" stroke-width="1"/></svg>
  <svg style="left:1166px;top:617px" width="13" height="13" viewBox="0 0 13 13"><path d="M0.800 6.500L6.500 0.800 12.200 6.500 6.500 12.200z" fill="none" stroke="#1c1c1c" stroke-width="1.200"/></svg>
  <div class="a" style="left:660px;top:600px;width:2px;height:34px;background:#b81818"></div>
  <svg style="left:653px;top:593px" width="16" height="9" viewBox="0 0 16 9"><path d="M0 0.500h15.500L7.800 8.500z" fill="#c81414"/></svg>
  <!-- keyframe -->
  <div class="a" style="left:652px;top:636px;width:64px;height:23px;background:#e7ac1d"></div>
  <div class="a" style="left:658px;top:641px;width:12px;height:12px;border:1.500px solid #1a1a1a"></div>
  <svg style="left:660px;top:643px" width="9" height="8" viewBox="0 0 9 8"><path d="M0.800 3.800L3.200 6.400 8 1" fill="none" stroke="#111" stroke-width="1.500"/></svg>
  <span class="tt pix" style="left:676px;top:641px;font-size:12px;color:#161000">主画格</span>
  <!-- bottom tabs -->
  <div class="a" style="left:0px;top:612px;width:51px;height:22px;background:#f0f0f0;border-right:1px solid #6a6a6a;border-bottom:1px solid #6a6a6a"></div>
  <span class="tt pix" style="left:7px;top:619px;font-size:12px;color:#000">导览列</span>
  <div class="a" style="left:52px;top:615px;width:57px;height:17px;background:#fafafa;border:1px solid #e0e0e0;border-right:1px solid #666;border-bottom:1px solid #666"></div>
  <span class="tt pix" style="left:56px;top:617px;font-size:12px;color:#000">树状检视</span>
  <svg style="left:6px;top:639px" width="16" height="16" viewBox="0 0 16 16"><path d="M5 0.500h6l4.500 4.500v6l-4.500 4.500h-6L0.500 11V5z" fill="#757575"/><path d="M3.500 8l4-3.500v2.200h5v2.600h-5v2.200z" fill="#969696"/></svg>
  <svg style="left:31px;top:639px" width="16" height="16" viewBox="0 0 16 16"><path d="M5 0.500h6l4.500 4.500v6l-4.500 4.500h-6L0.500 11V5z" fill="#757575"/><path d="M12.500 8l-4-3.500v2.200h-5v2.600h5v2.200z" fill="#969696"/></svg>
</div>
</body>
</html>
